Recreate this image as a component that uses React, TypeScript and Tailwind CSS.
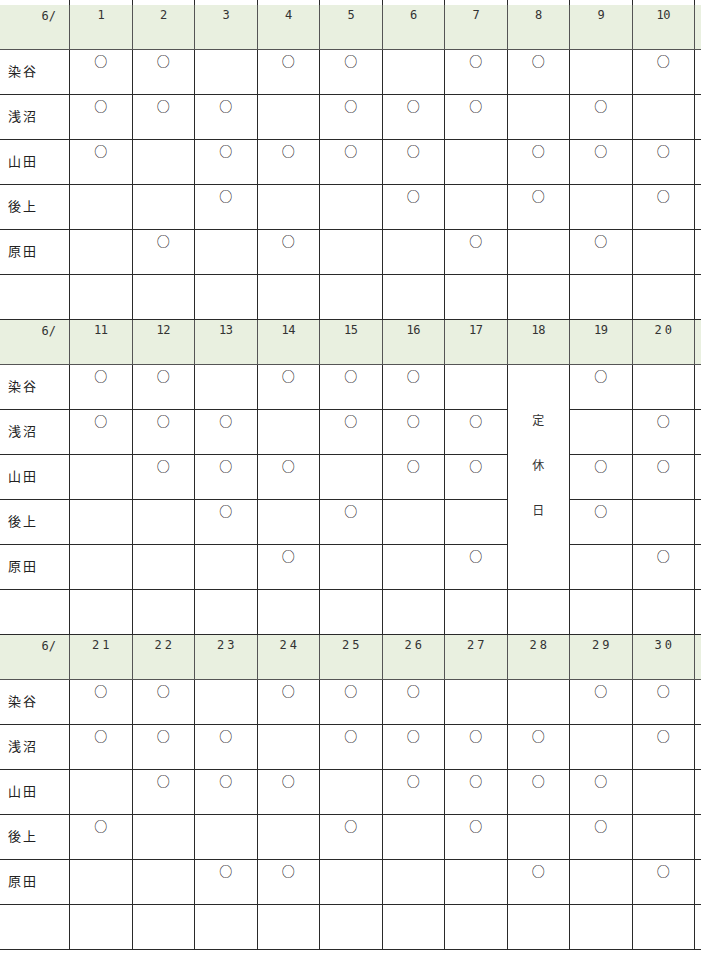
import * as React from 'react';

// Shift sheet for June: three blocks of ten days, one row per staff member.
const NAMES = ['染谷', '浅沼', '山田', '後上', '原田'];

interface Block {
  start: number;
  rows: string[]; // 'O' = on shift, '_' = off, one char per day
  holiday?: number; // day number shown as merged 定休日 column
}

const BLOCKS: Block[] = [
  {
    start: 1,
    rows: ['OO_OO_OO_O', 'OOO_OOO_O_', 'O_OOOO_OOO', '__O__O_O_O', '_O_O__O_O_'],
  },
  {
    start: 11,
    rows: ['OO_OOO__O_', 'OOO_OOO__O', '_OOO_OO_OO', '__O_O___O_', '___O__O__O'],
    holiday: 18,
  },
  {
    start: 21,
    rows: ['OO_OOO__OO', 'OOO_OOOO_O', '_OOO_OOOO_', 'O___O_O_O_', '__OO___O_O'],
  },
];

const GRID = 'grid grid-cols-[70px_repeat(10,62.5px)_1fr]';
const LINE = 'border-r border-b border-[#2a2a2a]';
const MONO = { fontFamily: '"DejaVu Sans Mono", "Liberation Mono", monospace' };
const JP = { fontFamily: '"Noto Sans CJK JP", "Noto Sans", sans-serif' };

function Mark() {
  return (
    <span className="block text-center text-[13px] leading-none text-black pt-[4px] antialiased" style={JP}>
      ○
    </span>
  );
}

function ShiftBlock({ block }: { block: Block }) {
  const days = Array.from({ length: 10 }, (_, i) => block.start + i);

  return (
    <div className={GRID}>
      {/* header */}
      <div className="h-[45px] bg-[#e9f0e0] border-r border-b border-[#555] text-right pr-[13px] pt-[2px] text-[12px] text-[#333]" style={MONO}>
        6/
      </div>
      {days.map((d) => (
        <div
          key={d}
          className={`h-[45px] bg-[#e9f0e0] border-r border-b border-[#555] text-center pt-[1px] text-[12px] text-[#333] ${d >= 20 ? 'tracking-[3px] pl-[3px]' : 'tracking-[-0.5px]'}`}
          style={MONO}
        >
          {d}
        </div>
      ))}
      <div className="h-[45px] bg-[#e9f0e0] border-b border-[#555]" />

      {/* staff rows */}
      {NAMES.map((name, r) => (
        <React.Fragment key={name}>
          <div className={`h-[45px] ${LINE} pl-[8px] pt-[11px] text-[13px] tracking-[2px] text-[#222]`} style={JP}>
            {name}
          </div>
          {days.map((d, c) => {
            if (block.holiday === d) {
              if (r > 0) return null;
              return (
                <div key={d} className={`row-span-5 ${LINE} pt-[45px] text-center text-[12px] text-[#333]`} style={JP}>
                  <div className="h-[45px] pt-[1px]">定</div>
                  <div className="h-[45px] pt-[1px]">休</div>
                  <div className="h-[45px] pt-[1px]">日</div>
                </div>
              );
            }
            return (
              <div key={d} className={`h-[45px] ${LINE}`}>
                {block.rows[r][c] === 'O' && <Mark />}
              </div>
            );
          })}
          <div className="h-[45px] border-b border-[#2a2a2a]" />
        </React.Fragment>
      ))}

      {/* spacer row */}
      <div className={`h-[45px] ${LINE}`} />
      {days.map((d) => (
        <div key={d} className={`h-[45px] ${LINE}`} />
      ))}
      <div className="h-[45px] border-b border-[#2a2a2a]" />
    </div>
  );
}

export default function App() {
  return (
    <div className="w-[701px] h-[960px] bg-white overflow-hidden">
      <div className={GRID}>
        {Array.from({ length: 11 }, (_, i) => (
          <div key={i} className="h-[5px] border-r border-[#2a2a2a]" />
        ))}
        <div className="h-[5px]" />
      </div>
      {BLOCKS.map((b) => (
        <ShiftBlock key={b.start} block={b} />
      ))}
    </div>
  );
}
